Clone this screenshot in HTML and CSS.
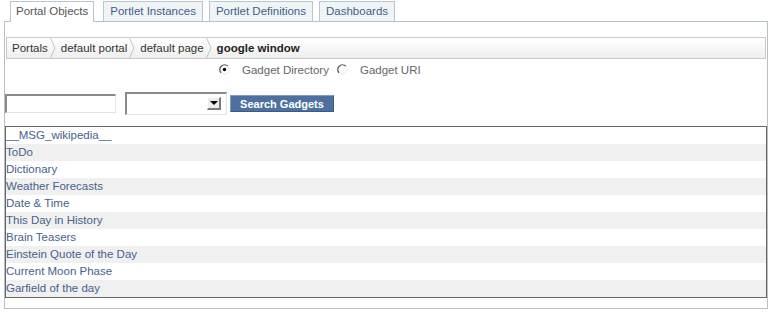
FILE: index.html
```html
<!DOCTYPE html>
<html>
<head>
<meta charset="utf-8">
<link rel="stylesheet" href="styles.css">
</head>
<body>
<ul class="tabs">
  <li class="tab active">Portal Objects</li>
  <li class="tab">Portlet Instances</li>
  <li class="tab">Portlet Definitions</li>
  <li class="tab">Dashboards</li>
</ul>
<div class="panel">
  <div class="crumbs">
    <span class="crumb">Portals</span>
    <svg class="sep" width="6" height="20" viewBox="0 0 6 20"><polyline points="0.5,0 5,10 0.5,20" fill="none" stroke="#c4c4c4" stroke-width="1"/></svg>
    <span class="crumb">default portal</span>
    <svg class="sep" width="6" height="20" viewBox="0 0 6 20"><polyline points="0.5,0 5,10 0.5,20" fill="none" stroke="#c4c4c4" stroke-width="1"/></svg>
    <span class="crumb">default page</span>
    <svg class="sep" width="6" height="20" viewBox="0 0 6 20"><polyline points="0.5,0 5,10 0.5,20" fill="none" stroke="#c4c4c4" stroke-width="1"/></svg>
    <span class="crumb current">google window</span>
  </div>
  <div class="choice">
    <label class="opt">
      <svg class="radio" width="11" height="11" viewBox="0 0 11 11"><path d="M2.2 8.8 A4.6 4.6 0 0 1 8.8 2.2" stroke="#555" stroke-width="1.4" fill="none"/><path d="M8.8 2.2 A4.6 4.6 0 0 1 2.2 8.8" stroke="#e6e6e6" stroke-width="1" fill="none"/><circle cx="5.5" cy="5.5" r="1.7" fill="#000"/></svg>
      <span>Gadget Directory</span>
    </label>
    <label class="opt">
      <svg class="radio" width="11" height="11" viewBox="0 0 11 11"><path d="M2.2 8.8 A4.6 4.6 0 0 1 8.8 2.2" stroke="#555" stroke-width="1.4" fill="none"/><path d="M8.8 2.2 A4.6 4.6 0 0 1 2.2 8.8" stroke="#e6e6e6" stroke-width="1" fill="none"/></svg>
      <span>Gadget URI</span>
    </label>
  </div>
  <div class="search">
    <input class="field" type="text">
    <span class="combo"><span class="arrow"></span></span>
    <button class="btn" type="button">Search Gadgets</button>
  </div>
  <table class="gadgets">
    <tr><td>__MSG_wikipedia__</td></tr>
    <tr><td>ToDo</td></tr>
    <tr><td>Dictionary</td></tr>
    <tr><td>Weather Forecasts</td></tr>
    <tr><td>Date &amp; Time</td></tr>
    <tr><td>This Day in History</td></tr>
    <tr><td>Brain Teasers</td></tr>
    <tr><td>Einstein Quote of the Day</td></tr>
    <tr><td>Current Moon Phase</td></tr>
    <tr><td>Garfield of the day</td></tr>
  </table>
</div>
</body>
</html>
```
FILE: styles.css
```css
* { box-sizing: border-box; }
body {
  margin: 0;
  background: #fff;
  font-family: "Liberation Sans", Arial, sans-serif;
  font-size: 11.5px;
  color: #333;
}
.tabs {
  list-style: none;
  margin: 0;
  padding: 1px 0 0 10px;
  display: flex;
  gap: 6px;
  font-size: 11.5px;
}
.tab {
  height: 20px;
  line-height: 19px;
  padding: 0 6px;
  border: 1px solid #b9c6cf;
  border-bottom: none;
  background: #f1f4f7;
  color: #3e5f8a;
}
.tab.active {
  position: relative;
  z-index: 1;
  height: 21px;
  margin-bottom: -1px;
  margin-right: 3px;
  padding: 0 5px;
  background: #fff;
  color: #555;
}
.panel {
  margin: 0 4px;
  border: 1px solid #b3c1cb;
  padding: 15px 0 10px;
}
.crumbs {
  margin: 0 1px;
  height: 22px;
  border: 1px solid #c9c9c9;
  background: linear-gradient(#ffffff, #eeeeee);
  display: flex;
  align-items: center;
  padding-left: 5px;
  font-size: 11.5px;
}
.crumb { color: #333; }
.crumb.current { font-weight: bold; color: #222; }
.sep { display: block; margin: 0 5px 0 2px; }
.choice {
  height: 22px;
  display: flex;
  align-items: center;
  padding-left: 214px;
  color: #666;
}
.opt { display: flex; align-items: center; margin-right: 8px; }
.radio { display: block; margin-right: 12px; margin-top: -2px; }
.search {
  margin-top: 11px;
  height: 23px;
  display: flex;
  align-items: center;
}
.field {
  width: 111px;
  height: 19px;
  margin: 0;
  border-style: solid;
  border-width: 2px 1px 1px 2px;
  border-color: #8a8a8a #e2e2e2 #e2e2e2 #8a8a8a;
  background: #fff;
  padding: 0;
}
.combo {
  position: relative;
  margin-left: 9px;
  width: 102px;
  height: 23px;
  border-style: solid;
  border-width: 2px 1px 1px 2px;
  border-color: #8a8a8a #e4e4e4 #e4e4e4 #8a8a8a;
  background: #fff;
}
.arrow {
  position: absolute;
  right: 5px;
  top: 3px;
  width: 14px;
  height: 13px;
  background: #ececec;
  border-style: solid;
  border-width: 1px 2px 2px 1px;
  border-color: #fff #7a7a7a #7a7a7a #fff;
}
.arrow::after {
  content: "";
  position: absolute;
  left: 2px;
  top: 3px;
  border-left: 4px solid transparent;
  border-right: 4px solid transparent;
  border-top: 4px solid #000;
}
.btn {
  margin-left: 3px;
  width: 104px;
  height: 17px;
  padding: 0;
  border: 1px solid;
  border-color: #7f9cc4 #3b5a85 #3b5a85 #7f9cc4;
  background: #4e70a0;
  color: #fff;
  font-family: "Liberation Sans", Arial, sans-serif;
  font-size: 11px;
  font-weight: bold;
  letter-spacing: 0;
}
.gadgets {
  margin-top: 11px;
  width: 100%;
  border-collapse: collapse;
  border: 1px solid #666;
}
.gadgets td {
  height: 17px;
  padding: 0;
  color: #45628c;
  line-height: 17px;
}
.gadgets tr:nth-child(even) td { background: #f0f0f0; }
```
